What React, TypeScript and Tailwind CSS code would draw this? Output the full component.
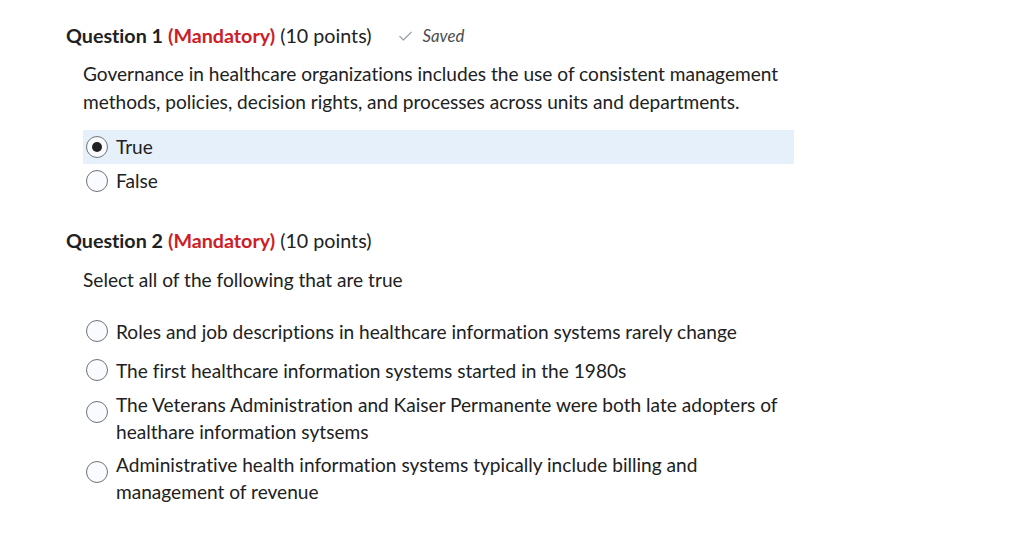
import { Check } from "lucide-react";

const Radio = ({ checked = false, className = "" }: { checked?: boolean; className?: string }) => (
  <span
    className={`flex h-[22px] w-[22px] shrink-0 items-center justify-center rounded-full border border-[#6e7477] bg-[#f9fbff] ${className}`}
  >
    {checked && <span className="h-[10px] w-[10px] rounded-full bg-[#202122]" />}
  </span>
);

const QuestionHeader = ({ num, saved = false }: { num: number; saved?: boolean }) => (
  <div className="flex h-[28px] items-center text-[19.7px]">
    <span className="font-bold text-[#202122]">Question {num}</span>
    <span className="ml-[5px] font-bold text-[#cd2026]">(Mandatory)</span>
    <span className="ml-[5px] text-[#202122]">(10 points)</span>
    {saved && (
      <span className="ml-[26px] flex items-center gap-[8px] text-[16.8px] italic text-[#494c4e]">
        <Check className="h-[17px] w-[17px] text-[#9ca3a8]" strokeWidth={1.75} />
        Saved
      </span>
    )}
  </div>
);

const options = [
  { text: "Roles and job descriptions in healthcare information systems rarely change", multi: false, space: "" },
  { text: "The first healthcare information systems started in the 1980s", multi: false, space: "" },
  {
    text: "The Veterans Administration and Kaiser Permanente were both late adopters of healthare information sytsems",
    multi: true,
    space: "-mt-[1px]",
  },
  {
    text: "Administrative health information systems typically include billing and management of revenue",
    multi: true,
    space: "mt-[1px]",
  },
];

export default function App() {
  return (
    <div className="min-h-screen bg-white pl-[66px] pt-[22px] text-[19.1px] text-[#202122] font-['Lato','Liberation_Sans',sans-serif] [font-variant-ligatures:none]">
      <QuestionHeader num={1} saved />
      <div className="pl-[17px]">
        <p className="mt-[10px] w-[711px] leading-[28px]">
          Governance in healthcare organizations includes the use of consistent management methods, policies,
          decision rights, and processes across units and departments.
        </p>
        <div className="mt-[14px] w-[711px]">
          <div className="flex h-[34px] items-center gap-[8px] bg-[#e6f0fa] pl-[3px]">
            <Radio checked />
            <span>True</span>
          </div>
          <div className="flex h-[34px] items-center gap-[8px] pl-[3px]">
            <Radio />
            <span>False</span>
          </div>
        </div>
      </div>

      <div className="mt-[29px]">
        <QuestionHeader num={2} />
      </div>
      <div className="pl-[17px]">
        <p className="mt-[11px] leading-[28px]">Select all of the following that are true</p>
        <div className="mt-[20px] flex w-[711px] flex-col gap-[5px]">
          {options.map((o, i) =>
            o.multi ? (
              <div key={i} className={`flex items-start gap-[8px] pl-[3px] ${o.space}`}>
                <Radio className="mt-[10px]" />
                <span className="flex-1 leading-[27px]">{o.text}</span>
              </div>
            ) : (
              <div key={i} className="flex min-h-[34px] items-center gap-[8px] pl-[3px]">
                <Radio />
                <span className="leading-[27px]">{o.text}</span>
              </div>
            )
          )}
        </div>
      </div>
    </div>
  );
}
